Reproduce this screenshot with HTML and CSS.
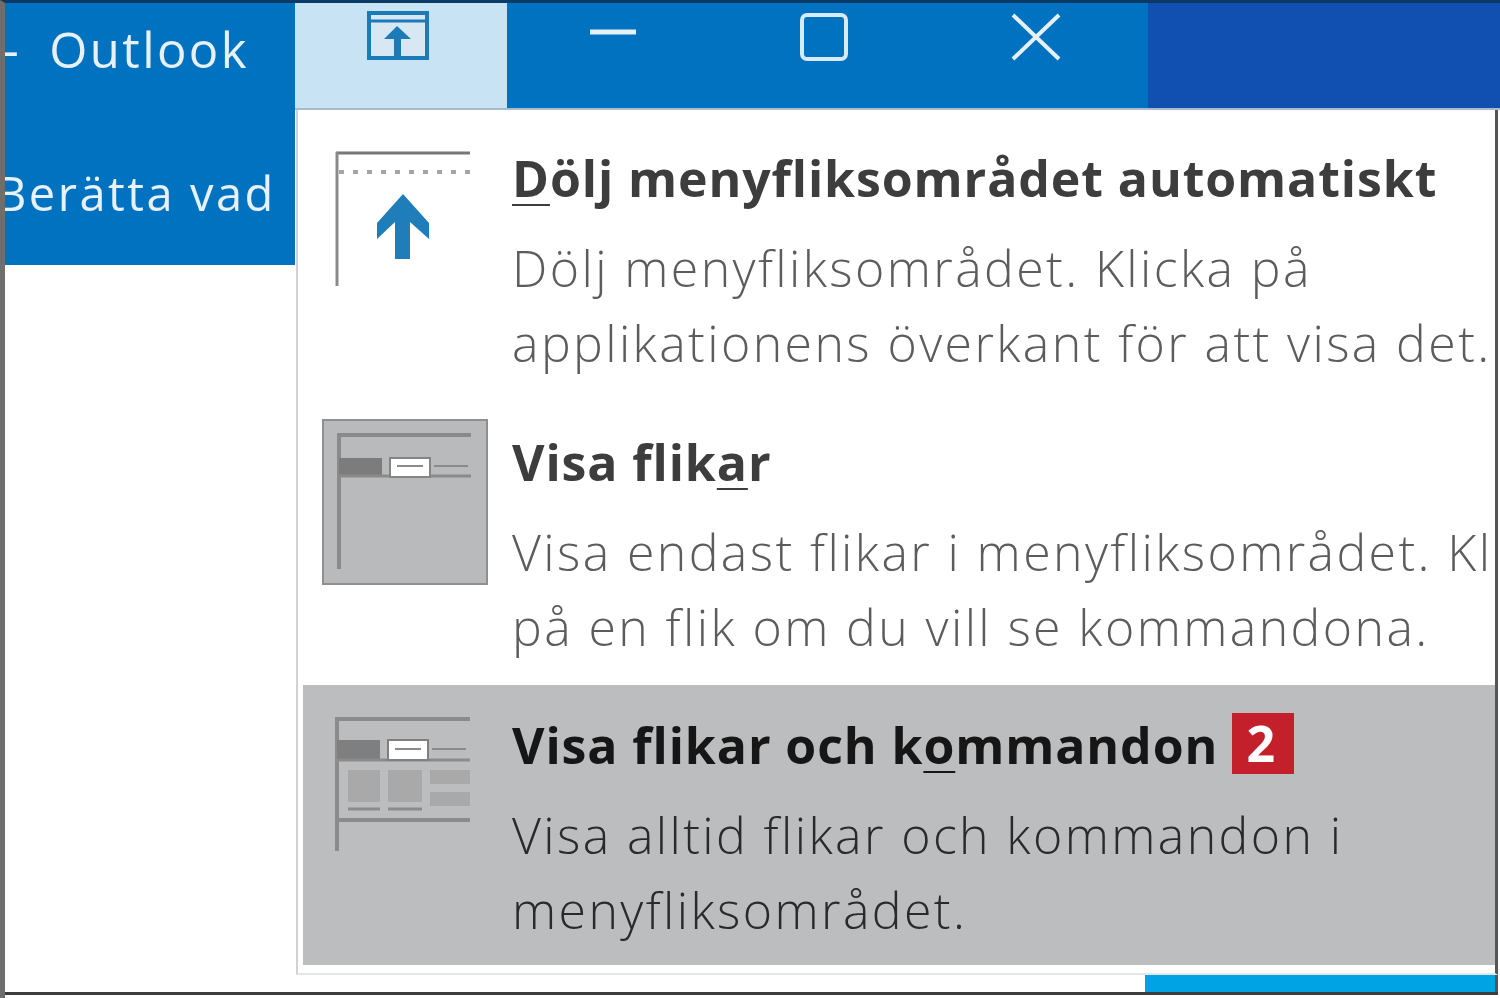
FILE: index.html
```html
<!DOCTYPE html>
<html lang="sv">
<head>
    <meta charset="UTF-8">
    <meta name="viewport" content="width=device-width, initial-scale=1.0">
    <title>Outlook</title>
    <link rel="stylesheet" href="styles.css">
</head>
<body>
    <div class="window">
        <div class="sidebar">
            <div class="app-name">- Outlook</div>
            <div class="tell-me">Berätta vad</div>
        </div>
        <div class="main">
            <div class="titlebar">
                <div class="controls">
                    <button class="ctrl ctrl-active">
                        <svg class="ribbon-icon" width="64" height="50" viewBox="0 0 64 50">
                            <rect x="2" y="2" width="58" height="45" fill="#d7e8f3" stroke="#1c7ab8" stroke-width="4"/>
                            <path d="M2 10H60" stroke="#1c7ab8" stroke-width="3"/>
                            <path d="M27 45V28H34V45ZM30 15L44 28H17Z" fill="#1c7ab8"/>
                        </svg>
                    </button>
                    <button class="ctrl ctrl-min">
                        <svg width="48" height="8" viewBox="0 0 48 8"><path d="M1 4H47" stroke="#e4f1fa" stroke-width="5"/></svg>
                    </button>
                    <button class="ctrl ctrl-max">
                        <svg width="50" height="50" viewBox="0 0 50 50"><rect x="3" y="3" width="44" height="44" rx="5" fill="none" stroke="#d6eaf7" stroke-width="4"/></svg>
                    </button>
                    <button class="ctrl ctrl-close">
                        <svg width="50" height="50" viewBox="0 0 50 50"><path d="M2 3L48 47M48 3L2 47" stroke="#e4f1fa" stroke-width="4"/></svg>
                    </button>
                </div>
                <div class="backdrop"></div>
            </div>
            <div class="statusbar"></div>
        </div>

        <div class="menu">
            <div class="menu-item">
                <div class="menu-icon">
                    <svg width="166" height="166" viewBox="0 0 166 166">
                        <path d="M14 18H148" stroke="#777" stroke-width="3"/>
                        <path d="M15 17V151" stroke="#8a8a8a" stroke-width="3"/>
                        <path d="M17 37H148" stroke="#a5a5a5" stroke-width="4" stroke-dasharray="5 9"/>
                        <path d="M81 59L107 88V104L88 87V124H73V87L55 104V88Z" fill="#1f7dba"/>
                    </svg>
                </div>
                <div class="menu-text">
                    <div class="menu-title"><u>D</u>ölj menyfliksområdet automatiskt</div>
                    <div class="menu-desc">Dölj menyfliksområdet. Klicka på<br>applikationens överkant för att visa det.</div>
                </div>
            </div>
            <div class="menu-item">
                <div class="menu-icon menu-icon-box">
                    <svg width="164" height="164" viewBox="0 0 164 164">
                        <path d="M13 14H147" stroke="#8a8a8a" stroke-width="4"/>
                        <path d="M15 13V148" stroke="#8a8a8a" stroke-width="4"/>
                        <rect x="15" y="37" width="43" height="19" fill="#7c7c7c"/>
                        <path d="M15 55H147" stroke="#8a8a8a" stroke-width="3"/>
                        <rect x="66" y="37" width="40" height="19" fill="#fff" stroke="#858585" stroke-width="2"/>
                        <path d="M73 45H99M110 45H144" stroke="#8a8a8a" stroke-width="2"/>
                    </svg>
                </div>
                <div class="menu-text">
                    <div class="menu-title">Visa flik<u>a</u>r</div>
                    <div class="menu-desc">Visa endast flikar i menyfliksområdet. Klicka<br>på en flik om du vill se kommandona.</div>
                </div>
            </div>
            <div class="menu-item menu-item-selected">
                <div class="menu-icon">
                    <svg width="166" height="166" viewBox="0 0 166 166">
                        <path d="M13 15H148" stroke="#8b8b8b" stroke-width="4"/>
                        <path d="M15 13V147" stroke="#8b8b8b" stroke-width="4"/>
                        <rect x="15" y="36" width="43" height="20" fill="#7f7f7f"/>
                        <path d="M15 56H148" stroke="#8b8b8b" stroke-width="3"/>
                        <rect x="66" y="36" width="40" height="20" fill="#fff" stroke="#808080" stroke-width="2"/>
                        <path d="M73 45H99M110 45H144" stroke="#8b8b8b" stroke-width="2"/>
                        <path d="M26 66H58V98H26ZM66 66H100V98H66ZM108 66H148V80H108ZM108 88H148V102H108Z" fill="#a9a9a9"/>
                        <path d="M26 105H58M66 105H100" stroke="#8b8b8b" stroke-width="3"/>
                        <path d="M15 116H148" stroke="#8b8b8b" stroke-width="4"/>
                    </svg>
                </div>
                <div class="menu-text">
                    <div class="menu-title">Visa flikar och k<u>o</u>mmandon<span class="badge">2</span></div>
                    <div class="menu-desc">Visa alltid flikar och kommandon i<br>menyfliksområdet.</div>
                </div>
            </div>
        </div>
    </div>
</body>
</html>
```

FILE: styles.css
```css
* {
    margin: 0;
    padding: 0;
    box-sizing: border-box;
}

html, body {
    width: 1500px;
    height: 998px;
    overflow: hidden;
    background: #fff;
}

body {
    font-family: 'Open Sans', 'Noto Sans', sans-serif;
}

.window {
    position: relative;
    width: 1500px;
    height: 998px;
    display: flex;
    overflow: hidden;
    background: #fff;
    border-top: 3px solid #0b3a66;
    border-left: 5px solid #6e6e6e;
    filter: blur(0.7px);
}

.window::after {
    content: '';
    position: absolute;
    left: 0;
    right: 2px;
    bottom: 3px;
    height: 3px;
    background: #3c3c3c;
}

.sidebar {
    width: 290px;
    height: 262px;
    flex-shrink: 0;
    background: #0072c0;
    color: #e6f1f9;
    overflow: hidden;
    font-size: 49px;
    white-space: nowrap;
}

.app-name {
    margin: 12px 0 0 -2px;
    line-height: 68px;
    letter-spacing: 2.4px;
    word-spacing: 13px;
}

.tell-me {
    margin: 76px 0 0 -9px;
    line-height: 68px;
    font-size: 47px;
    letter-spacing: 2.5px;
}

.main {
    flex-grow: 1;
    display: flex;
    flex-direction: column;
    justify-content: space-between;
}

.titlebar {
    height: 107px;
    display: flex;
    border-bottom: 2px solid #a9bcc9;
}

.controls {
    width: 853px;
    display: flex;
    background: #0072c0;
}

.ctrl {
    border: none;
    background: none;
    display: flex;
    justify-content: center;
    align-items: flex-start;
}

.ctrl-active {
    width: 212px;
    background: #c7e3f4;
    padding: 8px 4px 0 0;
}

.ctrl-min {
    width: 211px;
    padding-top: 25px;
}

.ctrl-max {
    width: 212px;
    padding-top: 9px;
}

.ctrl-close {
    width: 212px;
    padding-top: 9px;
}

.backdrop {
    flex-grow: 1;
    background: #1150b0;
}

.statusbar {
    height: 17px;
    margin: 0 2px 6px 850px;
    background: #00a4e4;
    border-right: 3px solid #555;
}

.menu {
    position: absolute;
    left: 291px;
    top: 107px;
    width: 1202px;
    height: 865px;
    overflow: hidden;
    background: #fff;
    border-left: 2px solid #d2d2d2;
    border-right: 3px solid #555;
    border-bottom: 2px solid #e6e6e6;
    padding: 8px 0 0 5px;
    display: flex;
    flex-direction: column;
}

.menu-item {
    height: 284px;
    flex-shrink: 0;
    display: flex;
    padding: 17px 0 0 19px;
    color: #5c5c5c;
}

.menu-item:last-child {
    height: 280px;
    margin-top: -1px;
}

.menu-item-selected {
    background: #bcbdbe;
    color: #2a2a2a;
}

.menu-icon {
    width: 166px;
    height: 166px;
    flex-shrink: 0;
}

.menu-item-selected .menu-icon {
    margin-top: 2px;
}

.menu-icon-box {
    background: #b9babb;
    border: 2px solid #8f8f8f;
}

.menu-text {
    margin-left: 24px;
    padding-top: 6px;
    white-space: nowrap;
}

.menu-title {
    font-size: 50px;
    line-height: 75px;
    font-weight: 700;
    color: #3d3d3d;
    letter-spacing: 0.9px;
    display: flex;
    align-items: center;
}

.menu-item-selected .menu-title {
    color: #161616;
}

.menu-title u {
    text-underline-offset: 7px;
    text-decoration-thickness: 2px;
}

.menu-desc {
    margin-top: 15px;
    font-size: 50px;
    font-weight: 300;
    line-height: 75px;
    letter-spacing: 2.4px;
}

.badge {
    width: 62px;
    height: 61px;
    margin-left: 14px;
    margin-top: -4px;
    padding-right: 5px;
    background: #c4202b;
    color: #fff;
    font-size: 50px;
    font-weight: 700;
    line-height: 61px;
    text-align: center;
    letter-spacing: 0;
}
```
